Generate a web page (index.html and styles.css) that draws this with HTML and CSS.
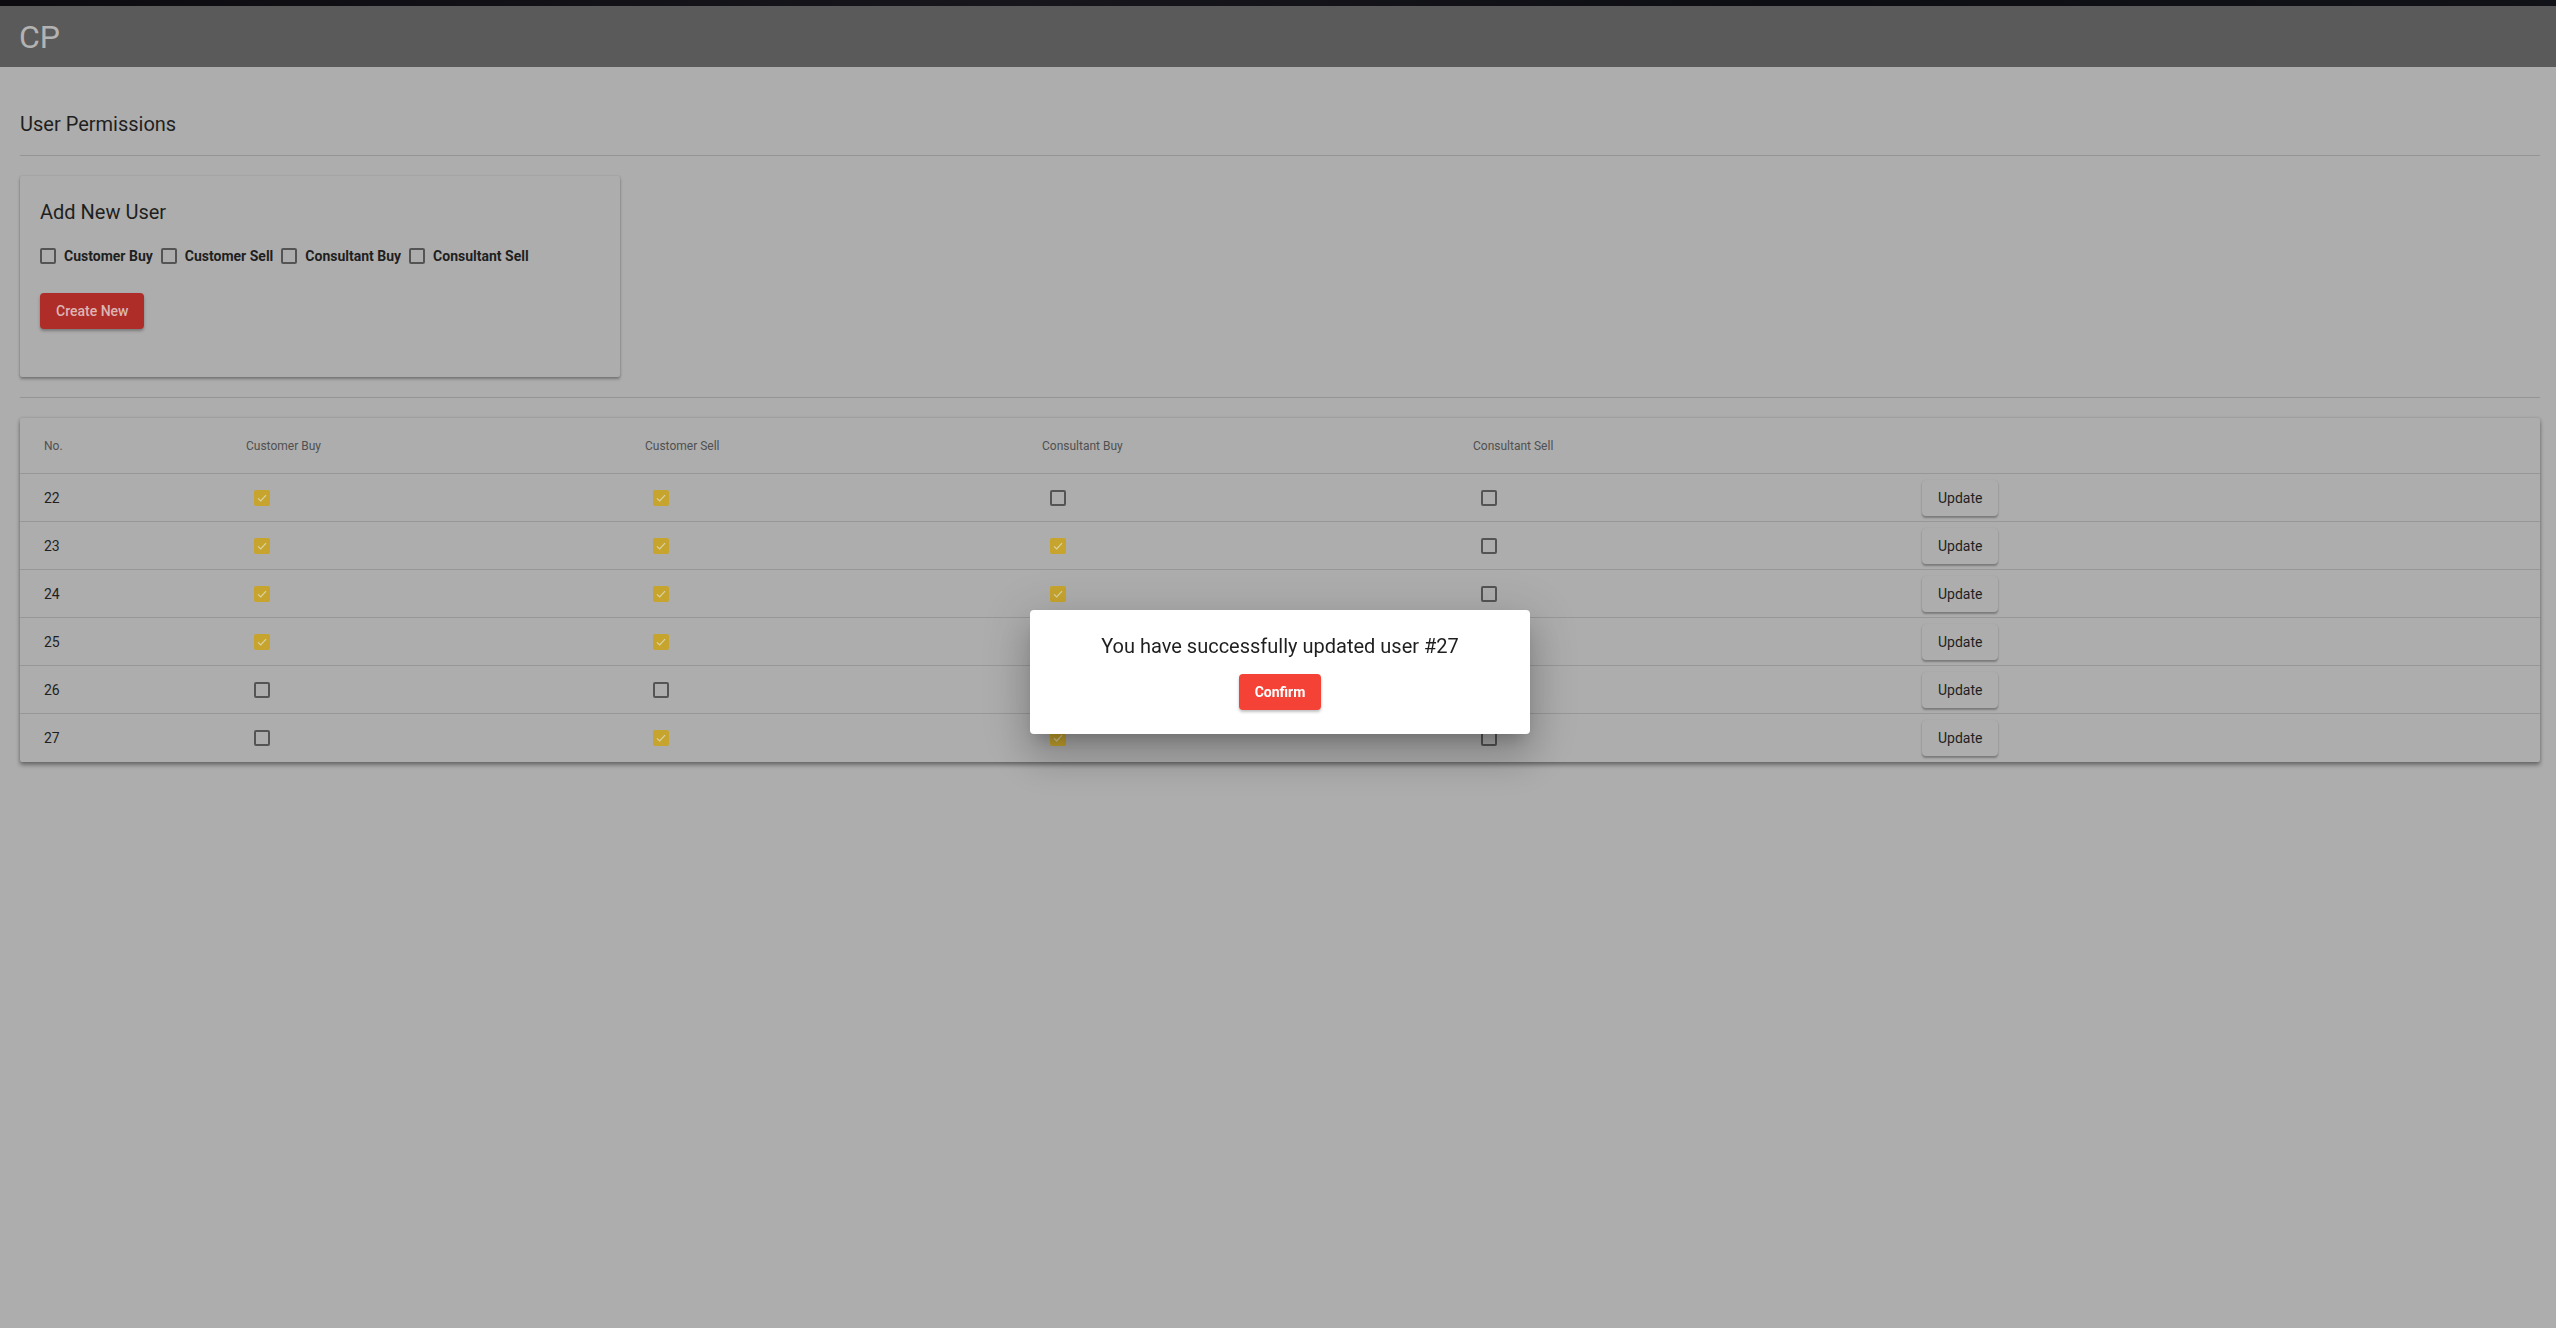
FILE: index.html
```html
<!DOCTYPE html>
<html>
<head>
<meta charset="utf-8">
<title>CP</title>
<link rel="stylesheet" href="styles.css">
</head>
<body>
<div class="strip"></div>
<header class="topbar"><span class="brand">CP</span></header>
<main class="main">
  <h2 class="page-title">User Permissions</h2>
  <hr class="divider">
  <section class="card add-card">
    <h3 class="card-title">Add New User</h3>
    <div class="check-row">
      <label class="check-item"><span class="box"></span><span class="check-label">Customer Buy</span></label>
      <label class="check-item"><span class="box"></span><span class="check-label">Customer Sell</span></label>
      <label class="check-item"><span class="box"></span><span class="check-label">Consultant Buy</span></label>
      <label class="check-item"><span class="box"></span><span class="check-label">Consultant Sell</span></label>
    </div>
    <button class="btn btn-red">Create New</button>
  </section>
  <hr class="divider divider-2">
  <section class="card table-card">
    <div class="trow thead">
      <div class="cell">No.</div>
      <div class="cell">Customer Buy</div>
      <div class="cell">Customer Sell</div>
      <div class="cell">Consultant Buy</div>
      <div class="cell">Consultant Sell</div>
      <div class="cell"></div>
    </div>
    <div class="trow">
      <div class="cell num">22</div>
      <div class="cell"><span class="box on"><svg viewBox="0 0 16 16"><path d="M4 8.3l2.7 2.7L12 5.2"/></svg></span></div>
      <div class="cell"><span class="box on"><svg viewBox="0 0 16 16"><path d="M4 8.3l2.7 2.7L12 5.2"/></svg></span></div>
      <div class="cell"><span class="box"></span></div>
      <div class="cell"><span class="box"></span></div>
      <div class="cell"><button class="btn btn-plain">Update</button></div>
    </div>
    <div class="trow">
      <div class="cell num">23</div>
      <div class="cell"><span class="box on"><svg viewBox="0 0 16 16"><path d="M4 8.3l2.7 2.7L12 5.2"/></svg></span></div>
      <div class="cell"><span class="box on"><svg viewBox="0 0 16 16"><path d="M4 8.3l2.7 2.7L12 5.2"/></svg></span></div>
      <div class="cell"><span class="box on"><svg viewBox="0 0 16 16"><path d="M4 8.3l2.7 2.7L12 5.2"/></svg></span></div>
      <div class="cell"><span class="box"></span></div>
      <div class="cell"><button class="btn btn-plain">Update</button></div>
    </div>
    <div class="trow">
      <div class="cell num">24</div>
      <div class="cell"><span class="box on"><svg viewBox="0 0 16 16"><path d="M4 8.3l2.7 2.7L12 5.2"/></svg></span></div>
      <div class="cell"><span class="box on"><svg viewBox="0 0 16 16"><path d="M4 8.3l2.7 2.7L12 5.2"/></svg></span></div>
      <div class="cell"><span class="box on"><svg viewBox="0 0 16 16"><path d="M4 8.3l2.7 2.7L12 5.2"/></svg></span></div>
      <div class="cell"><span class="box"></span></div>
      <div class="cell"><button class="btn btn-plain">Update</button></div>
    </div>
    <div class="trow">
      <div class="cell num">25</div>
      <div class="cell"><span class="box on"><svg viewBox="0 0 16 16"><path d="M4 8.3l2.7 2.7L12 5.2"/></svg></span></div>
      <div class="cell"><span class="box on"><svg viewBox="0 0 16 16"><path d="M4 8.3l2.7 2.7L12 5.2"/></svg></span></div>
      <div class="cell"><span class="box on"><svg viewBox="0 0 16 16"><path d="M4 8.3l2.7 2.7L12 5.2"/></svg></span></div>
      <div class="cell"><span class="box"></span></div>
      <div class="cell"><button class="btn btn-plain">Update</button></div>
    </div>
    <div class="trow">
      <div class="cell num">26</div>
      <div class="cell"><span class="box"></span></div>
      <div class="cell"><span class="box"></span></div>
      <div class="cell"><span class="box"></span></div>
      <div class="cell"><span class="box"></span></div>
      <div class="cell"><button class="btn btn-plain">Update</button></div>
    </div>
    <div class="trow last">
      <div class="cell num">27</div>
      <div class="cell"><span class="box"></span></div>
      <div class="cell"><span class="box on"><svg viewBox="0 0 16 16"><path d="M4 8.3l2.7 2.7L12 5.2"/></svg></span></div>
      <div class="cell"><span class="box on"><svg viewBox="0 0 16 16"><path d="M4 8.3l2.7 2.7L12 5.2"/></svg></span></div>
      <div class="cell"><span class="box"></span></div>
      <div class="cell"><button class="btn btn-plain">Update</button></div>
    </div>
  </section>
</main>
<div class="modal-layer">
  <div class="modal">
    <p class="modal-text">You have successfully updated user #27</p>
    <button class="btn btn-confirm">Confirm</button>
  </div>
</div>
</body>
</html>
```
FILE: styles.css
```css
* { box-sizing: border-box; }
html, body { margin: 0; padding: 0; }
body {
  background: #adadad;
  font-family: Roboto, "Liberation Sans", Arial, sans-serif;
  color: #1f1f1f;
  min-height: 1328px;
}
.strip {
  height: 6px;
  background: linear-gradient(90deg, #0b0b10, #16161c 40%, #0d0d14 70%, #111118);
}
.topbar {
  height: 61px;
  background: #5a5a5a;
  display: flex;
  align-items: center;
  padding-left: 19px;
}
.brand {
  font-size: 32px;
  font-weight: 400;
  color: #b3b3b3;
  line-height: 1;
}
.main {
  padding: 0 16px 0 20px;
}
.page-title {
  margin: 45px 0 0;
  font-size: 20px;
  font-weight: 400;
  line-height: 24px;
  color: #1f1f1f;
}
.divider {
  border: 0;
  border-top: 1px solid #949494;
  margin: 19px 0 0;
  height: 0;
}
.card {
  background: #adadad;
  border-radius: 2px;
  box-shadow: 0 2px 3px rgba(0,0,0,0.32), 0 0 2px rgba(0,0,0,0.12);
}
.add-card {
  width: 600px;
  margin-top: 20px;
  padding: 24px 20px 48px;
}
.card-title {
  margin: 0;
  font-size: 20px;
  font-weight: 400;
  line-height: 24px;
  color: #1f1f1f;
}
.check-row {
  display: flex;
  margin-top: 24px;
  height: 16px;
  align-items: center;
}
.check-item {
  display: flex;
  align-items: center;
  margin-right: 8px;
}
.check-label {
  margin-left: 8px;
  font-size: 14px;
  font-weight: 700;
  color: #1f1f1f;
}
.box {
  display: inline-block;
  width: 16px;
  height: 16px;
  border: 2px solid #545454;
  border-radius: 2px;
  flex: none;
}
.box.on {
  border: 0;
  background: #c6a42e;
}
.box svg {
  display: block;
  width: 16px;
  height: 16px;
}
.box svg path {
  fill: none;
  stroke: #dcd3a6;
  stroke-width: 1.2;
}
.btn {
  font-family: Roboto, "Liberation Sans", Arial, sans-serif;
  border: 0;
  border-radius: 4px;
  height: 36px;
  padding: 0 16px;
  font-size: 14px;
  font-weight: 500;
  cursor: pointer;
}
.btn-red {
  display: block;
  margin-top: 29px;
  background: #ae2d29;
  color: #dcb5b3;
  box-shadow: 0 2px 3px rgba(0,0,0,0.3);
}
.divider-2 {
  margin-top: 20px;
}
.table-card {
  margin-top: 20px;
  padding-left: 24px;
  box-shadow: 0 3px 4px rgba(0,0,0,0.38), 0 0 3px rgba(0,0,0,0.15);
}
.trow {
  display: grid;
  grid-template-columns: 202px 399px 397px 431px 449px 1fr;
  height: 48px;
  align-items: center;
  border-bottom: 1px solid #979797;
  margin-left: -24px;
  padding-left: 24px;
}
.trow.last { border-bottom: 0; }
.thead {
  height: 56px;
}
.thead .cell {
  font-size: 12px;
  color: #505050;
}
.cell {
  display: flex;
  align-items: center;
}
.cell .box { margin-left: 8px; }
.num {
  font-size: 14px;
  color: #1f1f1f;
}
.btn-plain {
  background: #adadad;
  color: #1f1f1f;
  font-weight: 400;
  box-shadow: 0 2px 2px rgba(0,0,0,0.28), 0 0 1px rgba(0,0,0,0.15);
}
.modal-layer {
  position: fixed;
  inset: 0;
  display: flex;
  align-items: center;
  justify-content: center;
  padding: 16px 0 0 4px;
}
.modal {
  width: 500px;
  background: #ffffff;
  border-radius: 4px;
  padding: 24px;
  text-align: center;
  box-shadow: 0 11px 15px -7px rgba(0,0,0,0.2), 0 24px 38px 3px rgba(0,0,0,0.14), 0 9px 46px 8px rgba(0,0,0,0.12);
}
.modal-text {
  margin: 0;
  font-size: 20px;
  line-height: 24px;
  color: #1f1f1f;
}
.btn-confirm {
  margin-top: 16px;
  background: #f44336;
  color: #ffffff;
  font-weight: 700;
  box-shadow: 0 2px 3px rgba(0,0,0,0.25);
}
```
